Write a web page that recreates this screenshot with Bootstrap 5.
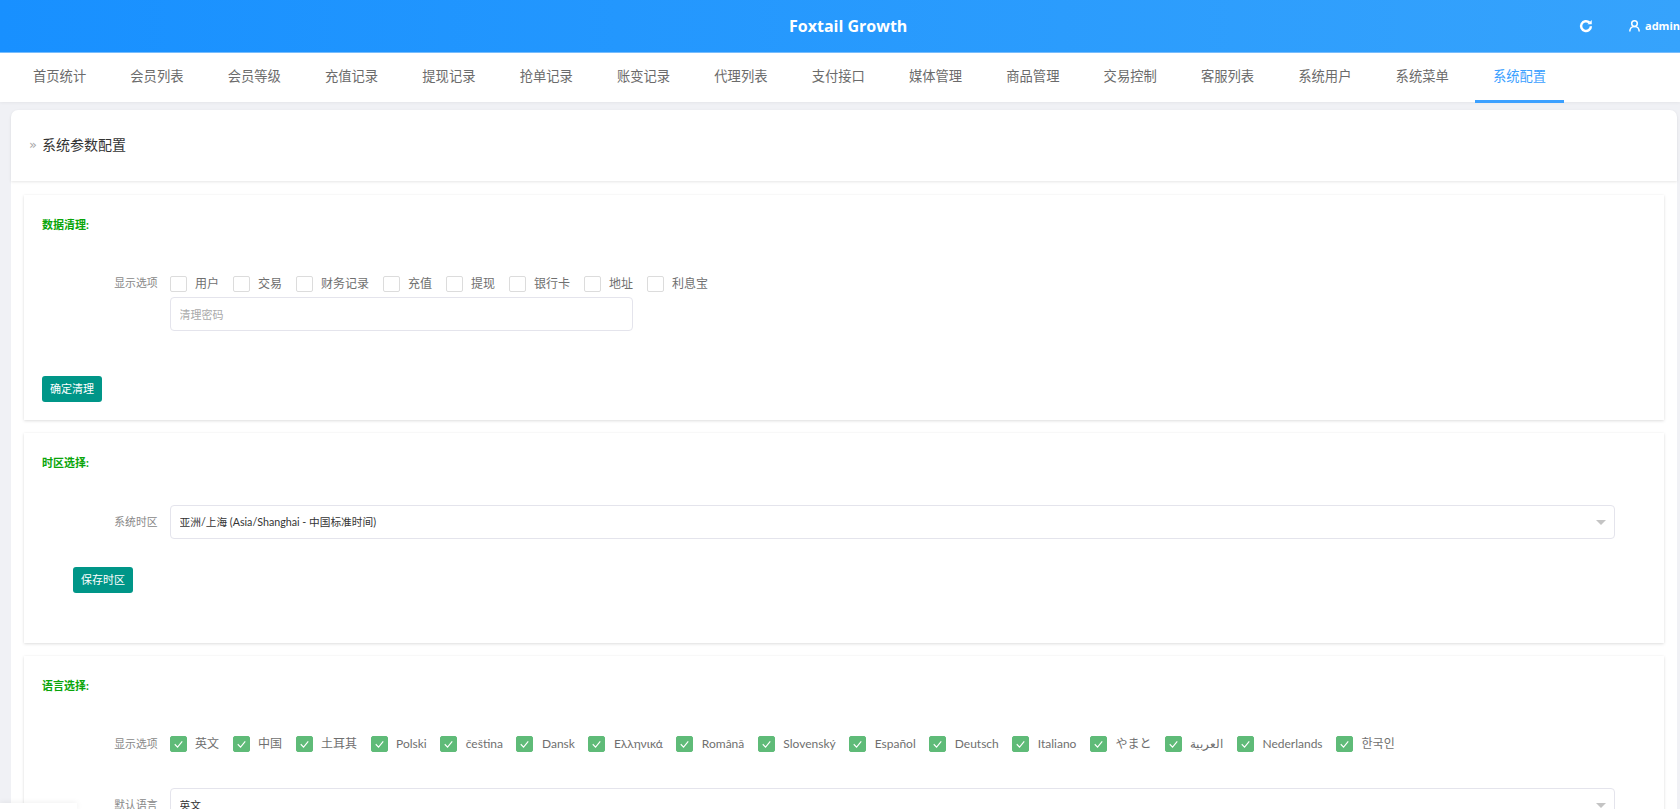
<!DOCTYPE html>
<html lang="zh-CN">
<head>
  <meta charset="UTF-8">
  <meta name="viewport" content="width=device-width, initial-scale=1">
  <title>Foxtail Growth</title>
  <link href="https://cdn.jsdelivr.net/npm/bootstrap@5.3.0/dist/css/bootstrap.min.css" rel="stylesheet">
  <style>
    html, body { height: 100%; overflow: hidden; }
    body {
      font-family: "Lato", "Noto Sans CJK SC", sans-serif;
      background: #f0f1f5;
      color: #666;
      font-size: 12px;
    }

    /* Top bar */
    .top-bar {
      height: 53px;
      background: linear-gradient(90deg, #1890ff, #36a3fc);
      border-bottom: 1px solid #79bfff;
      color: #fff;
      font-family: "Open Sans", sans-serif;
    }
    .brand-title { font-size: 16px; font-weight: 700; margin-left: 789px; width: 118px; white-space: nowrap; }
    .top-tools { margin-left: 672px; gap: 36px; white-space: nowrap; font-weight: 700; font-size: 11px; }
    .user-box { gap: 5px; }

    /* Menu */
    .menu-bar { height: 49px; background: #fff; padding-left: 15px; box-shadow: 0 1px 3px rgba(0,0,0,.05); position: relative; }
    .menu-bar .nav-link {
      height: 50px;
      line-height: 47px;
      padding: 0 18px;
      margin-right: 8.15px;
      font-size: 13.3px;
      color: #6b6b6b;
      white-space: nowrap;
    }
    .menu-bar .nav-link.active { color: #3ba0ff; border-bottom: 3px solid #3ba0ff; }

    /* Content */
    .page-body { padding: 8px 3px 0 11px; }
    .title-card {
      height: 71px;
      background: #fff;
      border-radius: 7px 7px 0 0;
      padding: 0 0 2px 18px;
      box-shadow: 0 1px 3px rgba(0,0,0,.1);
      font-size: 14px;
      color: #333;
      position: relative;
    }
    .title-mark { width: 13px; flex: none; color: #a8a8a8; font-family: "DejaVu Sans", sans-serif; font-size: 13px; line-height: 1; }
    .cards-wrap { background: #fff; padding: 14px 13px; }
    .conf-card {
      background: #fff;
      border: 0;
      border-radius: 0;
      padding: 0 18px;
      margin-bottom: 13px;
      box-shadow: 0 1px 3px rgba(0,0,0,.13), 0 0 2px rgba(0,0,0,.03);
    }
    .conf-title { height: 62px; padding-bottom: 1px; font-size: 11px; font-weight: 700; color: #0aa50a; }
    .conf-label { width: 115.5px; margin-right: 12px; flex: none; text-align: right; font-size: 10.8px; color: #888; }
    .opts-row { gap: 13.5px; }
    .opt-item { gap: 8.5px; font-size: 12px; color: #6f6f6f; white-space: nowrap; }
    .opt-item .form-check-input {
      width: 17px;
      height: 16px;
      margin: 0;
      flex: none;
      border: 1px solid #dcdcdc;
      border-radius: 2px;
    }
    .opt-item .form-check-input:checked {
      background-color: #5fbb78;
      border-color: #5fbb78;
      background-size: 100%;
      background-image: url("data:image/svg+xml,%3csvg xmlns='http://www.w3.org/2000/svg' viewBox='0 0 16 16'%3e%3cpath fill='none' stroke='%23fff' stroke-width='1.2' d='M4 8l3 3 5-6'/%3e%3c/svg%3e");
    }
    .conf-input, .conf-select {
      height: 34px;
      min-height: 34px;
      padding: 0 9px;
      font-size: 11px;
      border: 1px solid #e4e4ec;
      border-radius: 4px;
      box-shadow: none;
    }
    .conf-input { width: 463px; }
    .conf-input::placeholder { color: #aaa; }
    .conf-select {
      width: 1445px;
      color: #333;
      font-size: 10.7px;
      background-position: right 8px center;
      background-size: 10px 5px;
      background-image: url("data:image/svg+xml,%3csvg xmlns='http://www.w3.org/2000/svg' viewBox='0 0 10 5'%3e%3cpath fill='%23c4c4c4' d='M0 0h10L5 5z'/%3e%3c/svg%3e");
    }
    .btn-teal {
      width: 60px;
      height: 26px;
      padding: 0;
      background: #009688;
      border: 0;
      border-radius: 3px;
      color: #fff;
      font-size: 11px;
      line-height: 26px;
    }
    .row-clean { padding-top: 18px; height: 40px; }
    .clean-foot { padding: 45px 0 18px; }
    .zone-row { padding-top: 10px; }
    .zone-foot { padding: 28px 0 50px 31px; }
    .lang-row { padding-top: 17px; }
    .lang-select-row { padding-top: 35px; }
    .corner-box {
      position: fixed;
      left: 0;
      bottom: 0;
      width: 77px;
      height: 6px;
      background: #fff;
      box-shadow: 0 0 6px rgba(0,0,0,.08);
    }
  </style>
</head>
<body>
  <!-- Top bar -->
  <header class="top-bar d-flex align-items-center overflow-hidden">
    <div class="brand-title">Foxtail Growth</div>
    <div class="top-tools d-flex align-items-center">
      <svg width="14" height="14" viewBox="0 0 16 16" fill="none" stroke="#fff" stroke-width="2.8">
        <path d="M13.6 8.2A5.6 5.6 0 1 1 11.8 4"/>
        <path d="M9.6 6h5V1z" fill="#fff" stroke="none"/>
      </svg>
      <div class="user-box d-flex align-items-center">
        <svg width="11" height="12" viewBox="0 0 11 12" fill="none" stroke="#fff" stroke-width="1.5">
          <circle cx="5.5" cy="3.6" r="2.8"/>
          <path d="M.8 11.6c0-3 2-5.2 4.7-5.2s4.7 2.2 4.7 5.2"/>
        </svg>
        <span>admin</span>
      </div>
    </div>
  </header>

  <!-- Menu -->
  <ul class="menu-bar nav flex-nowrap">
    <li class="nav-item"><a class="nav-link" href="#">首页统计</a></li>
    <li class="nav-item"><a class="nav-link" href="#">会员列表</a></li>
    <li class="nav-item"><a class="nav-link" href="#">会员等级</a></li>
    <li class="nav-item"><a class="nav-link" href="#">充值记录</a></li>
    <li class="nav-item"><a class="nav-link" href="#">提现记录</a></li>
    <li class="nav-item"><a class="nav-link" href="#">抢单记录</a></li>
    <li class="nav-item"><a class="nav-link" href="#">账变记录</a></li>
    <li class="nav-item"><a class="nav-link" href="#">代理列表</a></li>
    <li class="nav-item"><a class="nav-link" href="#">支付接口</a></li>
    <li class="nav-item"><a class="nav-link" href="#">媒体管理</a></li>
    <li class="nav-item"><a class="nav-link" href="#">商品管理</a></li>
    <li class="nav-item"><a class="nav-link" href="#">交易控制</a></li>
    <li class="nav-item"><a class="nav-link" href="#">客服列表</a></li>
    <li class="nav-item"><a class="nav-link" href="#">系统用户</a></li>
    <li class="nav-item"><a class="nav-link" href="#">系统菜单</a></li>
    <li class="nav-item"><a class="nav-link active" href="#">系统配置</a></li>
  </ul>

  <main class="page-body">
    <div class="title-card d-flex align-items-center">
      <span class="title-mark">»</span>系统参数配置
    </div>

    <div class="cards-wrap">
      <!-- Data cleanup -->
      <section class="conf-card">
        <div class="conf-title d-flex align-items-center">数据清理:</div>
        <div class="row-clean d-flex align-items-start">
          <div class="conf-label">显示选项</div>
          <div class="opts-row d-flex">
            <label class="opt-item d-flex align-items-center"><input class="form-check-input" type="checkbox">用户</label>
            <label class="opt-item d-flex align-items-center"><input class="form-check-input" type="checkbox">交易</label>
            <label class="opt-item d-flex align-items-center"><input class="form-check-input" type="checkbox">财务记录</label>
            <label class="opt-item d-flex align-items-center"><input class="form-check-input" type="checkbox">充值</label>
            <label class="opt-item d-flex align-items-center"><input class="form-check-input" type="checkbox">提现</label>
            <label class="opt-item d-flex align-items-center"><input class="form-check-input" type="checkbox">银行卡</label>
            <label class="opt-item d-flex align-items-center"><input class="form-check-input" type="checkbox">地址</label>
            <label class="opt-item d-flex align-items-center"><input class="form-check-input" type="checkbox">利息宝</label>
          </div>
        </div>
        <div class="d-flex">
          <div class="conf-label"></div>
          <input class="form-control conf-input" type="password" placeholder="清理密码">
        </div>
        <div class="clean-foot"><button class="btn btn-teal" type="button">确定清理</button></div>
      </section>

      <!-- Time zone -->
      <section class="conf-card">
        <div class="conf-title d-flex align-items-center">时区选择:</div>
        <div class="zone-row d-flex align-items-center">
          <div class="conf-label">系统时区</div>
          <select class="form-select conf-select">
            <option>亚洲/上海 (Asia/Shanghai - 中国标准时间)</option>
          </select>
        </div>
        <div class="zone-foot"><button class="btn btn-teal" type="button">保存时区</button></div>
      </section>

      <!-- Language -->
      <section class="conf-card">
        <div class="conf-title d-flex align-items-center">语言选择:</div>
        <div class="lang-row d-flex align-items-center">
          <div class="conf-label">显示选项</div>
          <div class="opts-row d-flex">
            <label class="opt-item d-flex align-items-center"><input class="form-check-input" type="checkbox" checked>英文</label>
            <label class="opt-item d-flex align-items-center"><input class="form-check-input" type="checkbox" checked>中国</label>
            <label class="opt-item d-flex align-items-center"><input class="form-check-input" type="checkbox" checked>土耳其</label>
            <label class="opt-item d-flex align-items-center"><input class="form-check-input" type="checkbox" checked>Polski</label>
            <label class="opt-item d-flex align-items-center"><input class="form-check-input" type="checkbox" checked>čeština</label>
            <label class="opt-item d-flex align-items-center"><input class="form-check-input" type="checkbox" checked>Dansk</label>
            <label class="opt-item d-flex align-items-center"><input class="form-check-input" type="checkbox" checked>Ελληνικά</label>
            <label class="opt-item d-flex align-items-center"><input class="form-check-input" type="checkbox" checked>Română</label>
            <label class="opt-item d-flex align-items-center"><input class="form-check-input" type="checkbox" checked>Slovenský</label>
            <label class="opt-item d-flex align-items-center"><input class="form-check-input" type="checkbox" checked>Español</label>
            <label class="opt-item d-flex align-items-center"><input class="form-check-input" type="checkbox" checked>Deutsch</label>
            <label class="opt-item d-flex align-items-center"><input class="form-check-input" type="checkbox" checked>Italiano</label>
            <label class="opt-item d-flex align-items-center"><input class="form-check-input" type="checkbox" checked>やまと</label>
            <label class="opt-item d-flex align-items-center"><input class="form-check-input" type="checkbox" checked>العربية</label>
            <label class="opt-item d-flex align-items-center"><input class="form-check-input" type="checkbox" checked>Nederlands</label>
            <label class="opt-item d-flex align-items-center"><input class="form-check-input" type="checkbox" checked>한국인</label>
          </div>
        </div>
        <div class="lang-select-row d-flex align-items-center">
          <div class="conf-label">默认语言</div>
          <select class="form-select conf-select">
            <option>英文</option>
          </select>
        </div>
      </section>
    </div>
  </main>

  <div class="corner-box"></div>
</body>
</html>
